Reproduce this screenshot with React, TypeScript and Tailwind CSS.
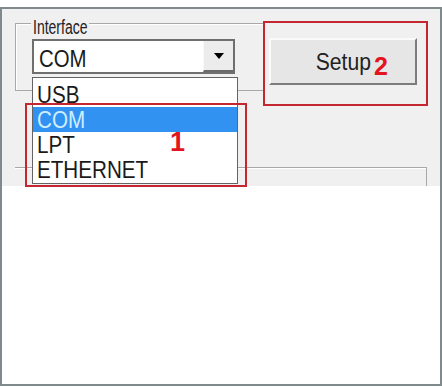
const items = ["USB", "COM", "LPT", "ETHERNET"];

function ComboBox() {
  return (
    <div className="relative flex h-[35px] w-[203px] border-2 border-[#6f6f6f] bg-white">
      <div className="flex-1 pl-[5px] pt-[6px] text-[24px] leading-none text-[#1a1a1a]">
        <span className="inline-block origin-left scale-x-[0.85]">COM</span>
      </div>
      <div className="flex h-full w-[30px] items-center justify-center border-l border-l-[#f8f8f8] border-b-2 border-b-[#6a6a6a] bg-[#ececec]">
        <div className="h-0 w-0 border-x-[5px] border-t-[6px] border-x-transparent border-t-black" />
      </div>

      {/* open dropdown list */}
      <ul className="absolute left-[-2px] top-[36px] z-10 h-[107px] w-[206px] border border-[#646464] bg-white pt-[4px]">
        {items.map((it) => (
          <li
            key={it}
            className={
              it === "COM"
                ? "h-[25px] bg-[#3292f2] pl-[4px] text-[24px] leading-[25px] text-[#cdeeff]"
                : "h-[25px] pl-[4px] text-[24px] leading-[25px] text-[#1a1a1a]"
            }
          >
            <span className="inline-block origin-left scale-x-[0.86]">{it}</span>
          </li>
        ))}
      </ul>
    </div>
  );
}

export default function App() {
  return (
    <div className="relative h-[387px] w-[442px] bg-white pt-[7px] font-['Liberation_Sans',Arial,sans-serif]">
      <div className="flex h-[379px] flex-col overflow-hidden border-2 border-[#7f8a8c]">
        {/* dialog area */}
        <div className="h-[177px] shrink-0 overflow-hidden bg-[#f0f0f0] px-[13px] pt-[14px]">
          <div className="flex items-start">
            {/* Interface group */}
            <div className="relative h-[68px] w-[249px] border border-[#a8a8a8] pl-[16px] pt-[15px] shadow-[inset_1px_1px_0_#ffffff]">
              <div className="absolute left-[15px] top-[-7px] h-[20px] w-[58px] bg-[#f0f0f0] pl-[2px] text-[20px] leading-none text-[#222]">
                <span className="inline-block origin-left scale-x-[0.7]">Interface</span>
              </div>
              <ComboBox />
            </div>

            <button className="ml-[5px] mt-[15px] flex h-[47px] w-[148px] items-center justify-center border-2 border-t-[#fafafa] border-l-[#fafafa] border-r-[#7c7c7c] border-b-[#7c7c7c] bg-[#e6e6e6] text-[24px] leading-none text-[#222]">
              <span className="inline-block scale-x-[0.88]">Setup</span>
            </button>
          </div>

          {/* next group (cut off) */}
          <div className="mt-[76px] h-[60px] w-[412px] border-t border-r border-[#a8a8a8] shadow-[inset_0_1px_0_#ffffff]" />
        </div>

        <div className="flex-1 bg-white" />
      </div>

      {/* annotations */}
      <div className="absolute left-[25px] top-[103px] z-20 h-[84px] w-[222px] border-2 border-[#c4272f]" />
      <div className="absolute left-[263px] top-[21px] z-20 h-[85px] w-[165px] border-2 border-[#c4272f]" />
      <span className="absolute left-[170px] top-[129px] z-20 text-[27px] font-bold leading-none text-[#e3141e]">
        1
      </span>
      <span className="absolute left-[374px] top-[54px] z-20 text-[25px] font-bold leading-none text-[#e3141e]">
        2
      </span>
    </div>
  );
}
